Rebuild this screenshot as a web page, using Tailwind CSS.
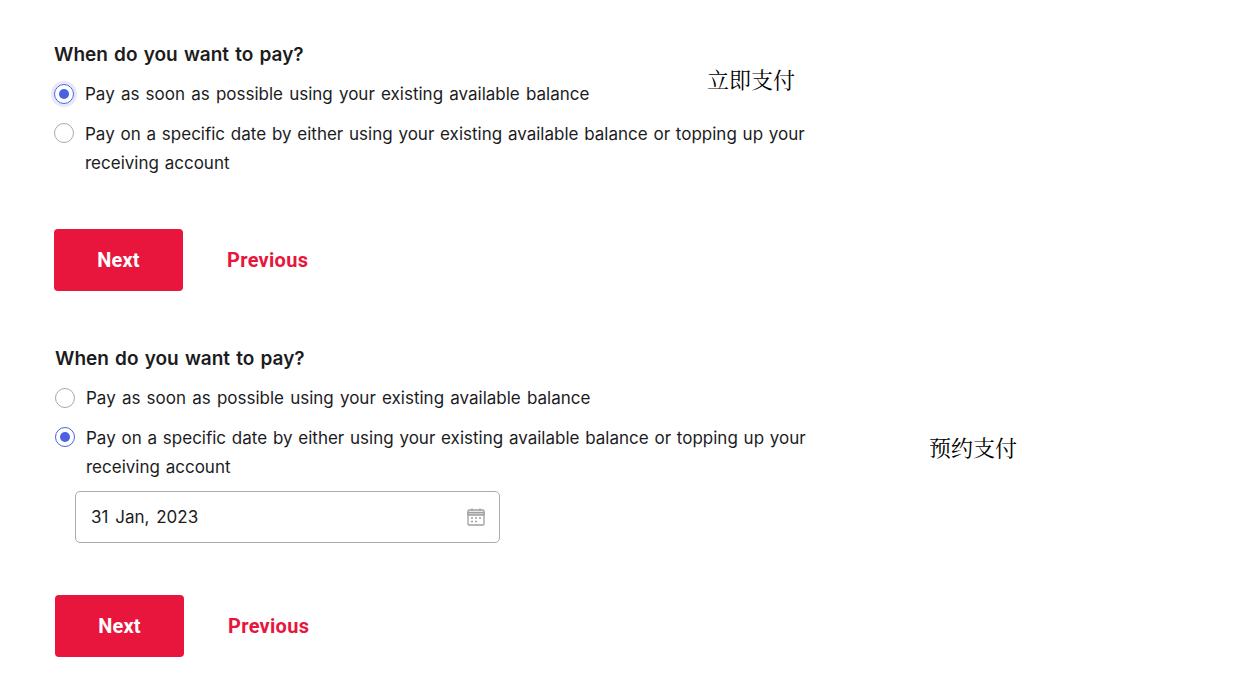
<!DOCTYPE html>
<html lang="en">

<head>
    <meta charset="UTF-8" />
    <meta name="viewport" content="width=device-width, initial-scale=1" />
    <title>When do you want to pay?</title>
    <script src="https://cdn.jsdelivr.net/npm/@tailwindcss/browser@4"></script>
</head>

<body class="bg-white font-['Inter',sans-serif] text-[#1c1c1e]">
  <div class="relative w-[1244px] h-[689px] overflow-hidden pt-[43px]">

    <!-- Annotations -->
    <span class="absolute left-[707px] top-[64px] text-[22px] leading-[30px] text-black font-['Noto_Serif_CJK_SC','Noto_Sans_CJK_SC',serif]">立即支付</span>
    <span class="absolute left-[929px] top-[432px] text-[22px] leading-[30px] text-black font-['Noto_Serif_CJK_SC','Noto_Sans_CJK_SC',serif]">预约支付</span>

    <!-- Pay now -->
    <section class="ml-[54px] w-[760px]">
      <h2 class="text-[19px] leading-[24px] font-semibold [word-spacing:1.4px]">When do you want to pay?</h2>
      <div class="mt-[13px] flex gap-[11px] h-[28px] items-center">
        <span class="w-[20px] h-[20px] shrink-0 rounded-full border-[1.5px] border-[#4a62e0] ring-[3px] ring-[#e6e9fb] flex items-center justify-center">
          <span class="w-[10px] h-[10px] rounded-full bg-[#4a62e0]"></span>
        </span>
        <p class="text-[17px] leading-[28px] [word-spacing:1.4px]">Pay as soon as possible using your existing available balance</p>
      </div>
      <div class="mt-[12px] flex gap-[11px]">
        <span class="mt-[3px] w-[20px] h-[20px] shrink-0 rounded-full border-[1.5px] border-[#a8a8a8]"></span>
        <p class="text-[17px] leading-[28.5px] [word-spacing:1px] w-[730px]">Pay on a specific date by either using your existing available balance or topping up your receiving account</p>
      </div>
      <div class="mt-[52px] flex items-center gap-[44px]">
        <button class="w-[129px] h-[62px] rounded-[4px] bg-[#e8163c] text-white text-[20px] font-bold tracking-[0.2px] font-['Roboto',sans-serif]">Next</button>
        <a href="#" class="text-[20px] font-bold tracking-[0.3px] text-[#e8163c] font-['Roboto',sans-serif]">Previous</a>
      </div>
    </section>

    <!-- Pay on a date -->
    <section class="ml-[55px] mt-[56px] w-[760px]">
      <h2 class="text-[19px] leading-[24px] font-semibold [word-spacing:1.4px]">When do you want to pay?</h2>
      <div class="mt-[13px] flex gap-[11px] h-[28px] items-center">
        <span class="w-[20px] h-[20px] shrink-0 rounded-full border-[1.5px] border-[#a8a8a8]"></span>
        <p class="text-[17px] leading-[28px] [word-spacing:1.4px]">Pay as soon as possible using your existing available balance</p>
      </div>
      <div class="mt-[12px] flex gap-[11px]">
        <span class="mt-[3px] w-[20px] h-[20px] shrink-0 rounded-full border-[1.5px] border-[#4a62e0] flex items-center justify-center">
          <span class="w-[10px] h-[10px] rounded-full bg-[#4a62e0]"></span>
        </span>
        <p class="text-[17px] leading-[28.5px] [word-spacing:1px] w-[730px]">Pay on a specific date by either using your existing available balance or topping up your receiving account</p>
      </div>
      <div class="mt-[10px] ml-[20px] w-[425px] h-[52px] rounded-[5px] border-[1.5px] border-[#ababab] flex items-center justify-between pl-[15px] pr-[13px]">
        <span class="mt-[2px] text-[17px] [word-spacing:2px]">31 Jan, 2023</span>
        <svg width="20" height="20" viewBox="0 0 20 20" fill="none" stroke="#a0a0a0" stroke-width="1.3">
          <rect x="2" y="3" width="16" height="15" rx="1" />
          <path d="M2 5.5h16v2.5h-16z" fill="#d8d8d8" />
          <path d="M6 1.5v2.5M14 1.5v2.5" />
          <path d="M5 11h2M9 11h2M13 11h2M5 14.5h2M9 14.5h2" stroke-width="1.6" />
        </svg>
      </div>
      <div class="mt-[52px] flex items-center gap-[44px]">
        <button class="w-[129px] h-[62px] rounded-[4px] bg-[#e8163c] text-white text-[20px] font-bold tracking-[0.2px] font-['Roboto',sans-serif]">Next</button>
        <a href="#" class="text-[20px] font-bold tracking-[0.3px] text-[#e8163c] font-['Roboto',sans-serif]">Previous</a>
      </div>
    </section>
  </div>
</body>

</html>
